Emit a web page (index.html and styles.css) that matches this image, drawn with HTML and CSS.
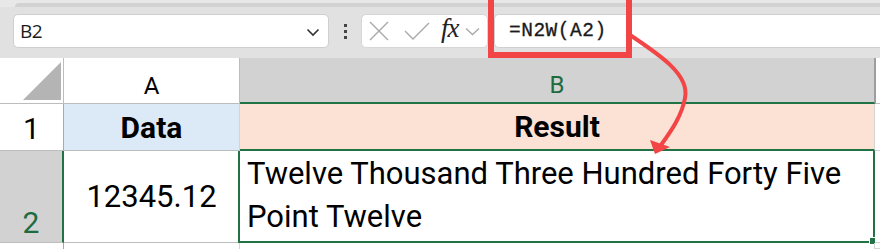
FILE: index.html
```html
<!DOCTYPE html>
<html>
<head>
<meta charset="utf-8">
<link rel="stylesheet" href="styles.css">
</head>
<body>
<div class="app">
  <div class="top-edge"><div class="top-band"></div></div>
  <div class="fbar">
    <div class="namebox">
      <span class="name">B2</span>
      <svg class="chev" width="14" height="9" viewBox="0 0 14 9"><path d="M1.5 1.5 L7 7 L12.5 1.5" fill="none" stroke="#333" stroke-width="1.6"/></svg>
    </div>
    <div class="dots"><i></i><i></i><i></i></div>
    <div class="fxbox">
      <svg class="ic-x" width="22" height="22" viewBox="0 0 22 22"><path d="M2 2 L20 20 M20 2 L2 20" stroke="#a9a9a9" stroke-width="1.4" fill="none"/></svg>
      <svg class="ic-ok" width="26" height="20" viewBox="0 0 26 20"><path d="M1 10 L9 18 L25 2" stroke="#a9a9a9" stroke-width="1.4" fill="none"/></svg>
      <span class="fx">fx</span>
      <svg class="chev2" width="15" height="9" viewBox="0 0 15 9"><path d="M1 1.5 L7.5 7.5 L14 1.5" fill="none" stroke="#a9a9a9" stroke-width="1.4"/></svg>
    </div>
    <div class="formula">=N2W(A2)</div>
  </div>
  <div class="sheet">
    <div class="cell corner"><div class="tri"></div></div>
    <div class="cell colhdr">A</div>
    <div class="cell colhdr sel">B</div>
    <div class="cell blank hdrblank"></div>

    <div class="cell rowhdr">1</div>
    <div class="cell a1">Data</div>
    <div class="cell b1">Result</div>
    <div class="cell blank"></div>

    <div class="cell rowhdr rsel">2</div>
    <div class="cell a2">12345.12</div>
    <div class="cell b2">Twelve Thousand Three Hundred Forty Five Point Twelve<span class="handle"></span></div>
    <div class="cell blank"></div>

    <div class="cell rowhdr r3"></div>
    <div class="cell r3a"></div>
    <div class="cell r3b"></div>
    <div class="cell blank"></div>
  </div>

  <div class="callout"></div>
  <svg class="arrow" width="880" height="249" viewBox="0 0 880 249">
    <path d="M630 35 C 660 55, 690 75, 685 98 C 682 115, 672 130, 661 145" fill="none" stroke="#f24646" stroke-width="4"/>
    <polygon points="655,154 650,140 670,147" fill="#f24646"/>
  </svg>
</div>
</body>
</html>
```
FILE: styles.css
```css
* { box-sizing: border-box; }
html, body { margin: 0; padding: 0; }
body { width: 880px; height: 249px; overflow: hidden; background: #fff; }

.app { position: relative; width: 880px; height: 249px; overflow: hidden; }

.top-edge { height: 7px; background: #e8e8e8; padding-top: 3px; padding-left: 15px; }
.top-band { height: 4px; background: #d2d2d2; border-top-left-radius: 4px; }

.fbar {
  height: 51px;
  background: #e1e1e1;
  display: flex;
  align-items: flex-start;
  padding: 7px 0 0 13px;
}
.namebox {
  width: 316px; height: 34px;
  background: #fff;
  border: 1px solid #cfcfcf;
  border-radius: 5px;
  display: flex; align-items: center; justify-content: space-between;
  padding: 0 8px 0 6px;
  font-family: "Open Sans", "Noto Sans", sans-serif;
  font-size: 19px; color: #1a1a1a;
}
.name { letter-spacing: -0.5px; }
.chev { margin-top: 2px; }
.dots {
  width: 32px; height: 34px;
  display: flex; flex-direction: column; align-items: center; justify-content: center; gap: 3px;
}
.dots i { display: block; width: 3px; height: 3px; background: #444; }
.fxbox {
  width: 127px; height: 34px;
  background: #fff;
  border: 1px solid #d6d6d6;
  border-radius: 5px;
  display: flex; align-items: center;
  padding-left: 6px;
}
.ic-x { margin-right: 14px; }
.ic-ok { margin-right: 11px; }
.fx {
  font-family: "Liberation Serif", "DejaVu Serif", serif;
  font-style: italic; font-size: 27px; color: #222;
  margin-top: -5px; margin-right: 6px; letter-spacing: -1px;
}
.formula {
  margin-left: 6px;
  flex: 1; height: 34px;
  background: #fff;
  border: 1px solid #cfcfcf;
  border-right: none;
  border-radius: 5px 0 0 5px;
  font-family: "Liberation Mono", "DejaVu Sans Mono", monospace;
  font-size: 19.5px; letter-spacing: 0.5px;
  color: #1a1a1a;
  -webkit-text-stroke: 0.3px #1a1a1a;
  display: flex; align-items: center;
  padding-left: 14px;
}

.sheet {
  display: grid;
  grid-template-columns: 64px 176px 635px 5px;
  grid-template-rows: 46px 47px 92px 6px;
  font-family: "Roboto", "Liberation Sans", sans-serif;
  color: #000;
}
.cell {
  border-right: 1px solid #d4d4d4;
  border-bottom: 1px solid #d4d4d4;
  display: flex; align-items: center; justify-content: center;
  position: relative;
}
.corner {
  background: #fff;
  border-right-color: #bdbdbd; border-bottom-color: #bdbdbd;
  align-items: flex-end; justify-content: flex-end;
  padding: 0 2px 3px 0;
}
.tri {
  width: 38px; height: 38px; background: #b4b4b4;
  clip-path: polygon(100% 0, 100% 100%, 0 100%);
}
.colhdr {
  font-size: 24px; background: #fff;
  border-right-color: #bdbdbd; border-bottom-color: #bdbdbd;
  padding-top: 10px;
}
.colhdr.sel {
  background: #d2d2d2; color: #1e6b40;
  border-bottom: 2px solid #217346;
  border-right-color: #9e9e9e;
}
.hdrblank { border-bottom-color: #bdbdbd; border-left: 1px solid #9e9e9e; }
.blank { border-right: none; background: #fff; }
.rowhdr {
  font-size: 30px; background: #fff;
  border-right-color: #a9a9a9; border-bottom-color: #bdbdbd;
  padding-top: 2px;
}
.rsel {
  background: #d2d2d2; color: #1e6b40;
  border-right: 2px solid #217346;
  align-items: flex-end; padding-bottom: 2px;
}
.r3 { border-bottom: none; }
.r3a, .r3b { border-bottom: none; }
.a1 {
  background: #dce9f7; font-weight: 700; font-size: 30px;
  border-bottom-color: #bdbdbd;
}
.b1 {
  background: #fbe2d5; font-weight: 700; font-size: 30px;
  border-bottom-color: #217346; border-bottom-width: 2px;
}
.a2 {
  font-size: 31px; background: #fff;
  border-bottom-color: #bdbdbd;
}
.b2 {
  border: 2px solid #217346;
  border-top: none;
  margin-left: -2px;
  display: block;
  font-size: 31px; line-height: 43px;
  padding: 1px 20px 0 7px;
  text-align: left;
}
.handle {
  position: absolute; right: -4px; bottom: -4px;
  width: 6px; height: 6px; background: #217346;
  border: 1px solid #fff;
  box-sizing: content-box;
}

.callout {
  position: absolute; left: 488px; top: -6px;
  width: 144px; height: 64px;
  border: 6px solid #f24646;
}
.arrow { position: absolute; left: 0; top: 0; pointer-events: none; }
```
